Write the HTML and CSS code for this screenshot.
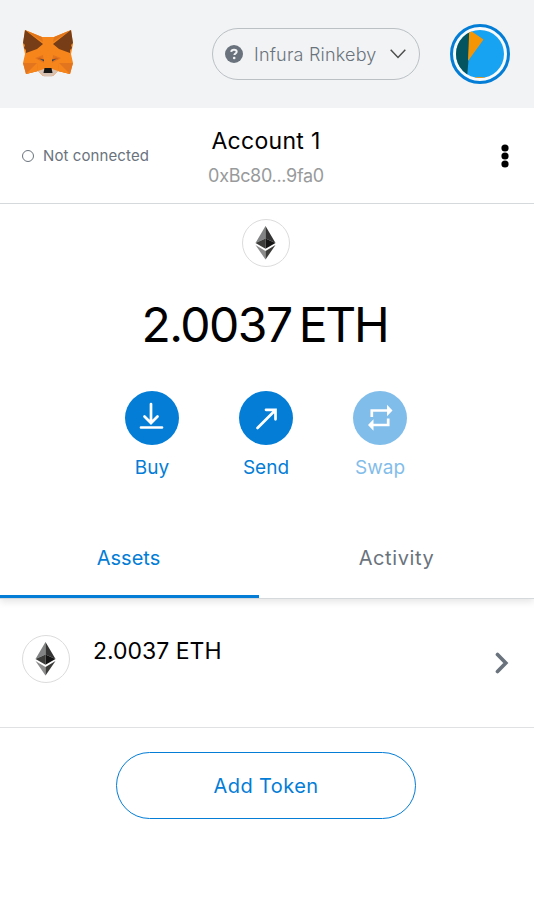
FILE: index.html
```html
<!DOCTYPE html>
<html lang="en">
<head>
<meta charset="utf-8">
<title>Wallet</title>
<link rel="stylesheet" href="styles.css">
</head>
<body>
<svg width="0" height="0" class="defs">
  <symbol id="eth" viewBox="0 0 20 34">
    <path fill="#828384" d="M10 0 0 17l10-4.500z"/>
    <path fill="#343434" d="M10 0v12.500L20 17z"/>
    <path fill="#3c3c3b" d="M0 17l10-4.500v10.300z"/>
    <path fill="#141414" d="M20 17l-10-4.500v10.300z"/>
    <path fill="#8c8c8c" d="M0 19l10 6v8.500z"/>
    <path fill="#3c3c3b" d="M20 19l-10 6v8.500z"/>
  </symbol>
</svg>
<header class="header">
  <svg class="fox" width="50" height="48" viewBox="0 0 50 48">
    <path fill="#f6851b" d="M2 0l17 7h12L48 0l2 14-2 10 2 9-3 11-12-3-5 5H20l-5-5-12 3L0 33l2-9L0 14z"/>
    <path fill="#e2761b" d="M2 0l18 12-1-5zM48 0L30 12l1-5z"/>
    <path fill="#763d16" d="M2 0l18 14-6 5L3 23V20L1 18 2 15 0 13zM48 0L30 14l6 5 11 4v-3l2-2-1-3 2-2z"/>
    <path fill="#e4751f" d="M0 33h14l1 8-12 3zM50 33H36l-1 8 12 3zM12 28l8-3 1 8zM38 28l-8-3-1 8z"/>
    <path fill="#f6851b" d="M14 33l-8 8-3 3 12-3zM36 33l8 8 3 3-12-3z"/>
    <path fill="#cd6116" d="M14 29l3-1.500 4 2.500zM36 29l-3-1.500-4 2.500z"/>
    <path fill="#3b4754" d="M17 29l4 .5v2zM33 29l-4 .5v2z"/>
    <path fill="#d7c1b3" d="M15 41l6-2h8l6 2-6 5.500h-8z"/>
    <path fill="#161616" d="M21.500 38h7l1 5h-9z"/>
  </svg>
  <div class="network">
    <svg width="18" height="18" viewBox="0 0 18 18"><circle cx="9" cy="9" r="9" fill="#6a737d"/><path d="M6.200 6.900C6.400 5.300 7.500 4.800 9 4.800c1.600 0 2.700.8 2.700 2 0 1.700-2.300 1.700-2.300 3.200" fill="none" stroke="#f2f3f4" stroke-width="2"/><circle cx="9.200" cy="13" r="1.300" fill="#f2f3f4"/></svg>
    <span class="network-name">Infura Rinkeby</span>
    <svg width="16" height="10" viewBox="0 0 16 10"><path d="M.7.8 8 8.400 15.300.8" fill="none" stroke="#4d4d4d" stroke-width="1.500"/></svg>
  </div>
  <svg class="avatar" width="60" height="60" viewBox="0 0 60 60">
    <clipPath id="c"><circle cx="30" cy="30" r="24"/></clipPath>
    <circle cx="30" cy="30" r="28.500" fill="#f8fafb" stroke="#037dd6" stroke-width="3"/>
    <g clip-path="url(#c)"><path fill="#18a2f2" d="M0 0h60v60H0z"/><path fill="#03545e" d="M0 0h20l-1.500 36-2 24H0z"/><path fill="#f69503" d="M19.500 0 21 7l12.500 8.500L18 37zM25 53h10v2H25z"/></g>
  </svg>
</header>
<section class="account-bar">
  <div class="status"><i class="dot"></i><span>Not connected</span></div>
  <div class="account"><div class="name">Account 1</div><div class="address">0xBc80...9fa0</div></div>
  <svg class="kebab" width="8" height="24" viewBox="0 0 8 24"><circle cx="4" cy="4" r="3.600"/><circle cx="4" cy="12" r="3.600"/><circle cx="4" cy="20" r="3.600"/></svg>
</section>
<main>
  <section class="overview">
    <div class="token"><svg width="21" height="34"><use href="#eth"/></svg></div>
    <div class="balance"><span class="amount">2.0037</span><span class="unit">ETH</span></div>
    <div class="actions">
      <div class="action">
        <svg width="54" height="54" viewBox="0 0 54 54"><circle cx="27" cy="27" r="27" fill="#037dd6"/><path d="M26 13v18M19.500 25.500 26 32l6.500-6.500M16 36.500h21" fill="none" stroke="#fff" stroke-width="2.700" stroke-linecap="round"/></svg>
        <span class="buy">Buy</span>
      </div>
      <div class="action">
        <svg width="54" height="54" viewBox="0 0 54 54"><circle cx="27" cy="27" r="27" fill="#037dd6"/><path d="M18.500 37 36 19.500M27 18.800h9.500v9.500" fill="none" stroke="#fff" stroke-width="2.700" stroke-linecap="round"/></svg>
        <span class="send">Send</span>
      </div>
      <div class="action disabled">
        <svg width="54" height="54" viewBox="0 0 54 54"><circle cx="27" cy="27" r="27" fill="#037dd6"/><path d="M18.800 26v-6.500H35M35.200 27.500V34H19" fill="none" stroke="#fff" stroke-width="2.700"/><path fill="#fff" d="M34 13.700l5.500 5.800L34 25.300zM20.500 28.200 15 34l5.500 5.800z"/></svg>
        <span class="swap">Swap</span>
      </div>
    </div>
  </section>
  <nav class="tabs"><div class="tab active"><span>Assets</span></div><div class="tab activity"><span>Activity</span></div></nav>
  <div class="asset">
    <div class="token"><svg width="21" height="34"><use href="#eth"/></svg></div>
    <span class="asset-value">2.0037 ETH</span>
    <svg class="chevron" width="14" height="22" viewBox="0 0 14 22"><path d="M2.500 2.500 10.800 11l-8.300 8.500" fill="none" stroke="#6a737d" stroke-width="3.700" stroke-linecap="round"/></svg>
  </div>
  <button class="add"><span>Add Token</span></button>
</main>
</body>
</html>
```
FILE: styles.css
```css
* { box-sizing: border-box; }
body { margin: 0; width: 534px; font-family: Inter, "Liberation Sans", sans-serif; background: #fff; color: #000; }
svg { display: block; flex: none; }
span, .name, .address { white-space: nowrap; }
.defs { position: absolute; }
.header { height: 108px; background: #f2f3f4; display: flex; align-items: center; padding: 0 24px 0 23px; }
.network { margin-left: auto; width: 208px; height: 52px; border: 1px solid #bbc0c5; border-radius: 26px; display: flex; align-items: center; padding: 0 13px 0 12px; }
.network-name { font-weight: 300; font-size: 18px; line-height: 28px; letter-spacing: .2px; color: #6a737d; margin-top: 1px; margin-left: 11px; margin-right: auto; }
.avatar { margin-left: 30px; }
.account-bar { height: 96px; border-bottom: 1px solid #d6d9dc; display: grid; grid-template-columns: 180px 172px 1fr; align-items: center; }
.status { display: flex; align-items: center; padding-left: 22px; font-size: 15px; letter-spacing: .1px; color: #6a737d; }
.dot { width: 12px; height: 12px; border: 1px solid #6a737d; border-radius: 50%; margin-right: 9px; }
.account { text-align: center; }
.name { font-size: 23px; line-height: 34px; letter-spacing: .3px; }
.address { font-size: 18px; line-height: 25px; margin-top: 5px; letter-spacing: -.3px; color: #989a9b; }
.kebab { justify-self: end; margin-right: 25px; }
.overview { height: 315px; display: flex; flex-direction: column; align-items: center; padding-top: 15px; padding-right: 2px; }
.token { width: 48px; height: 48px; border: 1px solid #dcdcdc; border-radius: 50%; display: flex; align-items: center; justify-content: center; flex: none; }
.token svg { margin-right: 1px; }
.balance { display: flex; gap: 7px; margin-top: 28px; margin-right: 3px; height: 60px; font-size: 48px; line-height: 60px; letter-spacing: -1.500px; }
.unit { letter-spacing: -2.200px; }
.actions { display: flex; gap: 60px; margin-top: 36px; }
.action { width: 54px; display: flex; flex-direction: column; align-items: center; gap: 9px; font-size: 19px; line-height: 27px; color: #037dd6; }
.disabled { opacity: .5; }
.tabs { height: 80px; display: flex; border-bottom: 1px solid #d6d9dc; box-shadow: 0 3px 7px rgba(0,0,0,.1); clip-path: inset(0 0 -16px 0); font-size: 20px; }
.tab { height: 79px; display: flex; justify-content: center; padding-top: 24px; line-height: 30px; }
.active { width: 259px; padding-right: 2px; color: #037dd6; border-bottom: 3px solid #037dd6; }
.activity { flex: 1; letter-spacing: .6px; color: #6a737d; }
.asset { height: 129px; display: flex; align-items: flex-start; padding: 36px 25px 0 22px; border-bottom: 1px solid #dfe1e3; }
.asset-value { margin-left: 23px; font-size: 23px; line-height: 32px; }
.chevron { margin: 17px 0 0 auto; }
.add { display: block; margin: 24px 0 0 116px; width: 300px; height: 67px; border: 1px solid #037dd6; border-radius: 34px; background: #fff; color: #037dd6; font: 20px/30px Inter, sans-serif; letter-spacing: .4px; }
```
